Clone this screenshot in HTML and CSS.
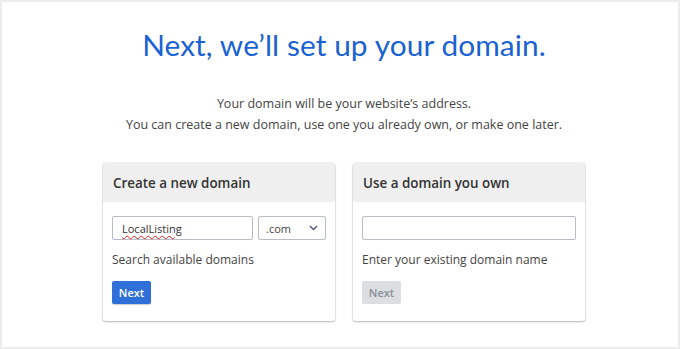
FILE: index.html
```html
<!DOCTYPE html>
<html>
<head>
<meta charset="utf-8">
<link rel="stylesheet" href="styles.css">
</head>
<body>
<div class="frame">
  <main class="page">
    <h1 class="title">Next, we’ll set up your domain.</h1>
    <p class="intro">Your domain will be your website’s address.<br>You can create a new domain, use one you already own, or make one later.</p>
    <div class="cards">
      <section class="card">
        <div class="card-head">Create a new domain</div>
        <div class="card-body">
          <div class="row">
            <div class="input input-name"><span class="typed">LocalListing</span></div>
            <div class="input select"><span>.com</span>
              <svg class="chev" width="9" height="6" viewBox="0 0 9 6"><path d="M1 1l3.5 3.5L8 1" fill="none" stroke="#4a5a70" stroke-width="1.4"/></svg>
            </div>
          </div>
          <p class="hint">Search available domains</p>
          <button class="btn btn-primary">Next</button>
        </div>
      </section>
      <section class="card">
        <div class="card-head">Use a domain you own</div>
        <div class="card-body">
          <div class="row">
            <div class="input input-full"></div>
          </div>
          <p class="hint">Enter your existing domain name</p>
          <button class="btn btn-disabled">Next</button>
        </div>
      </section>
    </div>
  </main>
</div>
</body>
</html>
```
FILE: styles.css
```css
html, body { margin: 0; padding: 0; background: #fff; }
body { width: 680px; height: 349px; overflow: hidden; font-family: "Open Sans", "Liberation Sans", sans-serif; }
.frame {
  box-sizing: border-box;
  width: 680px; height: 349px;
  border: 2px solid #ededed;
  padding-left: 8px;
}
.page { display: flex; flex-direction: column; align-items: center; }
.title {
  margin: 25px 0 0;
  font-family: Lato, "Open Sans", sans-serif;
  font-weight: 400;
  font-size: 29.8px;
  line-height: 36px;
  color: #1a62d2;
  letter-spacing: 0.1px;
}
.intro {
  margin: 30px 0 0;
  text-align: center;
  font-size: 12.5px;
  line-height: 21px;
  color: #444;
}
.cards { display: flex; gap: 18px; margin-top: 28px; }
.card {
  width: 232px; height: 158px;
  box-sizing: border-box;
  background: #fff;
  border-radius: 3px;
  box-shadow: 0 1px 2px rgba(0,0,0,0.25), 0 0 0 1px rgba(0,0,0,0.05);
  overflow: hidden;
}
.card-head {
  height: 39px;
  background: #efefef;
  padding: 0 10px;
  display: flex; align-items: center;
  font-size: 13.4px; font-weight: 600; color: #333;
}
.card-body { padding: 14px 9px 0 9px; }
.row { display: flex; gap: 5px; }
.input {
  box-sizing: border-box;
  height: 24px;
  border: 1px solid #b7bcc6;
  border-radius: 2px;
  background: #fff;
  display: flex; align-items: center;
  font-size: 11px; color: #333;
}
.input-name { width: 141px; padding-left: 9px; }
.typed { text-decoration: underline wavy #e02020; text-decoration-thickness: 1px; text-underline-offset: 2px; }
.select { width: 68px; padding: 0 7px; justify-content: space-between; color: #444; }
.input-full { width: 214px; }
.hint { margin: 9px 0 0; font-size: 12px; line-height: 22px; color: #444; }
.btn {
  margin-top: 10px;
  width: 39px; height: 23px;
  border: 0; border-radius: 2px;
  font-family: "Open Sans", sans-serif;
  font-size: 11px; font-weight: 600;
  padding: 0;
  display: block;
}
.btn-primary { background: #2f6fd8; color: #fff; box-shadow: 0 1px 1px rgba(0,0,0,0.2); }
.btn-disabled { background: #dcdee2; color: #8a8f98; }
```
